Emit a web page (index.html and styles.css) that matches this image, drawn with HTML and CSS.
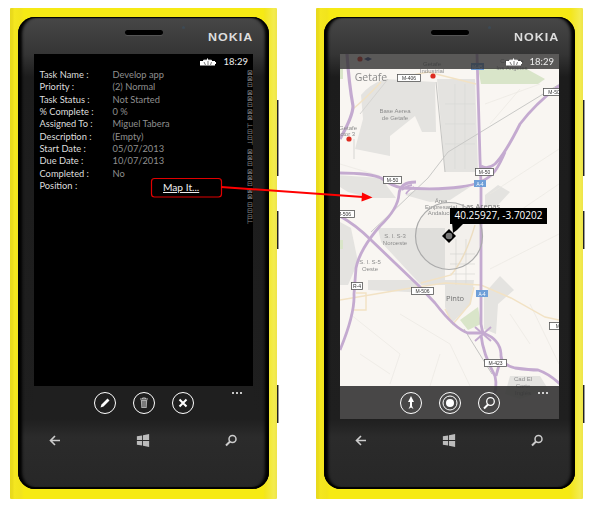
FILE: index.html
```html
<!DOCTYPE html>
<html lang="en">
<head>
<meta charset="utf-8">
<title>Task details and map</title>
<link rel="stylesheet" href="styles.css">
</head>
<body>
<main class="stage">
  <section class="phone">
    <i class="side-btn side-a"></i><i class="side-btn side-b"></i><i class="side-btn side-c"></i>
    <div class="bezel">
      <header class="bezel-top">
        <span></span><span class="speaker"></span>
        <div class="brand"><i class="sensor"></i><span class="logo">NOKIA</span></div>
      </header>
      <div class="screen">
        <div class="status">
          <svg class="battery" viewBox="0 0 16 8"><path d="M0 3h3V1.500l1 1 1-1.500 1 1.500L7.500 0 9 2.500 10 1l1 1.500 1-1V3h3v1h1v2h-1v1.500H0z" fill="#fff"/><path d="M4 4l1.500 3M8 3v4M11.500 4L10.500 7" stroke="#222" stroke-width=".6"/></svg>
          <span class="time">18:29</span>
        </div>
        <div class="content">
          <dl class="fields">
            <dt>Task Name :</dt><dd>Develop app</dd>
            <dt>Priority :</dt><dd>(2) Normal</dd>
            <dt>Task Status :</dt><dd>Not Started</dd>
            <dt>% Complete :</dt><dd>0 %</dd>
            <dt>Assigned To :</dt><dd>Miguel Tabera</dd>
            <dt>Description :</dt><dd>(Empty)</dd>
            <dt>Start Date :</dt><dd>05/07/2013</dd>
            <dt>Due Date :</dt><dd>10/07/2013</dd>
            <dt>Completed :</dt><dd>No</dd>
            <dt>Position :</dt><dd><a class="map-link">Map It...</a></dd>
          </dl>
          <div class="strip">
            <span class="tofu">⊠⊠⊟</span>
            <span class="tofu">⊠⊠⊟</span>
            <span class="tofu">⊠⊠</span>
            <span class="tofu">⊢⊟⊟⊣</span>
            <span class="tofu">⊠⊠⊟</span>
            <span class="tofu">⊠⊠⊟</span>
            <span class="tofu">⊠⊠</span>
            <span class="tofu">⊟⊟⊟⊢</span>
          </div>
        </div>
        <nav class="appbar">
          <span class="round"><svg viewBox="0 0 20 20"><path d="M5.500 14.500l1-3 6-6 2 2-6 6z" fill="#fff"/></svg></span>
          <span class="round"><svg viewBox="0 0 20 20"><path d="M6 6h8M8.500 6V5h3v1" fill="none" stroke="#bbb"/><path d="M6.800 7h6.400l-.5 8H7.300z" fill="#aaa"/><path d="M9 8v6M11 8v6" stroke="#222" stroke-width=".7"/></svg></span>
          <span class="round"><svg viewBox="0 0 20 20"><path d="M6.500 6.500l7 7M13.500 6.500l-7 7" stroke="#fff" stroke-width="2"/></svg></span>
          <span class="dots"><i></i><i></i><i></i></span>
        </nav>
      </div>
      <footer class="keys">
        <svg viewBox="0 0 14 14"><path d="M12 7H3M7 2.500L2.500 7 7 11.500" fill="none" stroke="#ccc" stroke-width="1.600"/></svg>
        <svg viewBox="0 0 16 16"><path d="M1 3.200l6-1v5.300H1zM8 2l7-1.300V7.500H8zM1 8.500h6v5.300l-6-1zM8 8.500h7v6.800l-7-1.300z" fill="#bbb"/></svg>
        <svg viewBox="0 0 14 14"><circle cx="8.500" cy="5.500" r="3.500" fill="none" stroke="#ccc" stroke-width="1.500"/><path d="M6 8L2 12" stroke="#ccc" stroke-width="2"/></svg>
      </footer>
    </div>
  </section>

  <section class="phone">
    <i class="side-btn side-a"></i><i class="side-btn side-b"></i><i class="side-btn side-c"></i>
    <div class="bezel">
      <header class="bezel-top">
        <span></span><span class="speaker"></span>
        <div class="brand"><i class="sensor"></i><span class="logo">NOKIA</span></div>
      </header>
      <div class="screen screen-map">
        <svg class="map" viewBox="0 0 219 365">
          <rect width="219" height="365" fill="#f9f6f2"/>
          <g fill="#e4e3e0">
            <path d="M21 41Q30 30 45 25L95 28 96 78 82 78 75 62 50 82 50 102 15 95 23 65z"/>
            <path d="M97 25L135 25 138 118 105 118z"/>
            <path d="M-2 121L41 124 56 144 31 144 8 138 0 133z"/>
            <path d="M65 141L78 135 130 133 110 146 90 148z"/>
            <path d="M38 174L105 174 105 231 81 231 41 188z"/>
            <path d="M0 168L11 174 18 208 8 231 0 231z"/>
            <path d="M28 226L75 226 88 239 28 236z"/>
            <path d="M145 141L158 131 170 138 158 151 145 153zM144 240L160 222 174 236 158 250 156 280 144 275z"/>
            <path d="M105 226L134 226 131 250 111 270 105 253z"/>
            <path d="M170 322L200 322 208 335 180 345 165 340z"/>
          </g>
          <g fill="#d9e5c9">
            <path d="M138 14L185 14 205 25 198 30 141 30z"/>
            <path d="M120 266L138 253 141 270 128 276z"/>
            <path d="M0 15L3 15 3 25 0 25zM0 186L3 186 3 195 0 195z"/>
          </g>
          <g fill="none" stroke="#ebe8e3" stroke-width=".7">
            <path d="M145 50L200 30M150 140L219 95M160 170L219 130M150 215L219 180M0 110L40 122M10 260L60 300L50 330M60 260L110 290L130 332M20 300L50 320M170 260L190 290M190 250L219 310M100 300L90 332M150 70L180 35"/>
            <path d="M110 200H135M110 210H135M110 220H135M116 185V231M126 185V231M105 50H135M105 70H135M105 90H135M115 30V115M125 30V115" stroke="#d9d8d5"/>
          </g>
          <g fill="none" stroke="#c9c9c7">
            <path d="M218 31L108 98 88 124 31 178"/>
            <path d="M96 28L105 118" stroke="#c4c4c2"/>
            <path d="M14 85L14 105M20 60L48 25" stroke="#d6d5d2"/>
            <path d="M124 275L152 320" stroke="#c4c4c2"/>
          </g>
          <g fill="none" stroke="#f2e2c4" stroke-width="1.400">
            <path d="M41 28Q25 45 13 55M58 24L88 18 136 30"/>
            <path d="M81 229L111 221Q125 205 135 171"/>
            <path d="M0 246L71 234 105 229 141 231 171 244 205 263 219 266"/>
            <path d="M14 256H26V239H16M105 255L113 270 130 250 134 233"/>
          </g>
          <g fill="none" stroke="#c4aad0" stroke-width="2.800" stroke-linejoin="round">
            <path d="M7 0Q9 30 13 52Q13 62 0 85" stroke-width="3.200"/>
            <path d="M137 0L140 105 141 130V270Q142 276 143 279"/>
            <path d="M220 31Q195 50 180 70Q165 100 155 110Q147 116 141 112"/>
            <path d="M-2 119Q30 119 41 124Q52 132 62 134Q100 136 120 133Q145 130 155 117Q160 110 165 98"/>
            <path d="M76 128Q60 128 59 140Q58 155 40 172Q20 195 16 214L14 240Q15 260 0 296"/>
            <path d="M62 136Q66 132 72 131M66 140Q68 136 74 133" stroke-width="1.800"/>
            <path d="M-2 161Q15 170 31 186L78 231 95 249Q115 275 128 279L143 279"/>
            <path d="M143 279Q160 285 161 300Q160 310 175 314Q190 316 198 316Q210 320 222 332"/>
            <path d="M141 281Q143 300 155 322Q158 335 152 345"/>
            <path d="M161 306Q158 314 156 322"/>
            <path d="M135 273L151 287M151 273L135 287" stroke-width="2"/>
          </g>
          <g fill="#dd2b20">
            <circle cx="93" cy="22" r="2.600"/><circle cx="9" cy="85" r="2.600"/><circle cx="20" cy="5" r="2.600"/>
          </g>
          <path d="M24 5l4-2 4 2-4 2z" fill="#3a4a8a"/>
          <g class="lbl" text-anchor="middle">
            <text x="31" y="27" class="big">Getafe</text>
            <text x="92" y="12">Getafe</text><text x="92" y="18.500">Industrial</text>
            <text x="172" y="9">Cerro de</text><text x="172" y="16">los Ángeles</text>
            <text x="55" y="59">Base Aerea</text><text x="55" y="66">de Getafe</text>
            <text x="8" y="76">Getafe</text><text x="4" y="82">Sector 3</text>
            <text x="101" y="149">Área</text><text x="101" y="155">Empresarial</text><text x="101" y="161">Andalucía</text>
            <text x="141" y="155" class="mid">Las Arenas</text>
            <text x="55" y="184">S. I. S-3</text><text x="55" y="191">Noroeste</text>
            <text x="30" y="210">S. I. S-5</text><text x="30" y="217">Oeste</text>
            <text x="115" y="247" class="mid">Pinto</text>
            <text x="183" y="327">Cad El</text><text x="183" y="334">Corte</text><text x="183" y="341">Inglés</text>
          </g>
          <g class="shield">
            <rect x="57.500" y="20.500" width="23" height="7"/><text x="69" y="26.300">M-406</text>
            <rect x="203.500" y="34.500" width="22" height="7"/><text x="214" y="40.300">M-50</text>
            <rect x="135.500" y="114.500" width="18" height="7"/><text x="144.500" y="120.300">M-50</text>
            <rect x="43.500" y="122.500" width="18" height="7"/><text x="52.500" y="128.300">M-50</text>
            <rect x="-6.500" y="156.500" width="21" height="7"/><text x="4" y="162.300">M-506</text>
            <rect x="11.500" y="228.500" width="11" height="7"/><text x="17" y="234.300">R-4</text>
            <rect x="71.500" y="233.500" width="22" height="7"/><text x="82.500" y="239.300">M-506</text>
            <rect x="209.500" y="268.500" width="22" height="7"/><text x="220" y="274.300">M-4</text>
            <rect x="144.500" y="305.500" width="22" height="7"/><text x="155.500" y="311.300">M-423</text>
          </g>
          <g class="shield-blue">
            <rect x="131" y="9" width="13" height="7"/><text x="137.500" y="15">M-45</text>
            <rect x="134" y="126" width="12" height="7"/><text x="140" y="132">A-4</text>
            <rect x="136" y="236" width="12" height="7"/><text x="142" y="242">A-4</text>
          </g>
          <circle cx="109" cy="182" r="33.500" fill="rgba(150,150,150,.06)" stroke="#aaa" stroke-width="1.200"/>
          <path d="M112 168h13l-8 8-4 3z" fill="#000"/>
          <path d="M109 175l7 7-7 7-7-7z" fill="#000"/>
          <circle cx="109" cy="182" r="3.300" fill="#777"/>
        </svg>
        <div class="status status-map">
          <svg class="battery" viewBox="0 0 16 8"><path d="M0 3h3V1.500l1 1 1-1.500 1 1.500L7.500 0 9 2.500 10 1l1 1.500 1-1V3h3v1h1v2h-1v1.500H0z" fill="#fff"/><path d="M4 4l1.500 3M8 3v4M11.500 4L10.500 7" stroke="#222" stroke-width=".6"/></svg>
          <span class="time">18:29</span>
        </div>
        <div class="coords">40.25927, -3.70202</div>
        <nav class="appbar appbar-map">
          <span class="round"><svg viewBox="0 0 20 20"><path d="M10 3l3 6h-2v4l1.500 3-2.500-1.500L7.500 16 9 13V9H7z" fill="#fff"/></svg></span>
          <span class="round"><svg viewBox="0 0 20 20"><circle cx="10" cy="10" r="7" fill="none" stroke="#fff"/><circle cx="10" cy="10" r="4" fill="#fff"/></svg></span>
          <span class="round"><svg viewBox="0 0 20 20"><circle cx="11.500" cy="8.500" r="3.800" fill="none" stroke="#fff" stroke-width="1.300"/><path d="M9 11.500L5 15.500" stroke="#fff" stroke-width="2"/></svg></span>
          <span class="dots"><i></i><i></i><i></i></span>
        </nav>
      </div>
      <footer class="keys">
        <svg viewBox="0 0 14 14"><path d="M12 7H3M7 2.500L2.500 7 7 11.500" fill="none" stroke="#ccc" stroke-width="1.600"/></svg>
        <svg viewBox="0 0 16 16"><path d="M1 3.200l6-1v5.300H1zM8 2l7-1.300V7.500H8zM1 8.500h6v5.300l-6-1zM8 8.500h7v6.800l-7-1.300z" fill="#bbb"/></svg>
        <svg viewBox="0 0 14 14"><circle cx="8.500" cy="5.500" r="3.500" fill="none" stroke="#ccc" stroke-width="1.500"/><path d="M6 8L2 12" stroke="#ccc" stroke-width="2"/></svg>
      </footer>
    </div>
  </section>

  <svg class="annotation" viewBox="0 0 605 516">
    <rect x="151.500" y="178.500" width="70" height="18.500" rx="3" fill="none" stroke="#e00000" stroke-width="1.200"/>
    <path d="M221 187L363 197" stroke="#f00" stroke-width="2"/>
    <path d="M362 192.500L372.500 197.500 361.500 201.500z" fill="#f00"/>
  </svg>
</main>
</body>
</html>
```
FILE: styles.css
```css
* { box-sizing: border-box; }
html, body { margin: 0; padding: 0; background: #fff; }
.stage {
  position: relative;
  width: 605px;
  height: 516px;
  padding: 8px 0 0 10px;
  display: flex;
  gap: 39px;
  align-items: flex-start;
  overflow: hidden;
  font-family: Lato, "Liberation Sans", sans-serif;
  filter: blur(.3px);
}
.phone {
  position: relative;
  width: 267px;
  height: 491px;
  padding: 9px 8px 10px;
  border-radius: 1px;
  background: linear-gradient(90deg, #e6d81e 0, #ecdd1c 3px, #f4e720 4px, #f2e41c 11px, #f6ea14 14px, #f6ea14 253px, #f3e61e 255px, #f3ec50 264px, #eee44a 267px);
}
.side-btn { position: absolute; left: 267px; width: 2px; background: #222; border-right: 1px solid #999; }
.side-a { top: 92px; height: 76px; }
.side-b { top: 203px; height: 38px; }
.side-c { top: 377px; height: 38px; }
.bezel {
  width: 251px;
  height: 472px;
  padding: 0 16px;
  border-radius: 17px;
  background: linear-gradient(180deg, #474747 0, #353535 37px, #1c1c1c 60px, #1f1f1f 402px, #2b2b2b 420px, #272727 100%);
  box-shadow: inset 5px 0 3px -1px #000, inset -5px 0 3px -1px #000, inset 0 1px 1px #000, inset 0 -2px 1px #000;
  display: flex;
  flex-direction: column;
}
.bezel-top {
  height: 37px;
  display: grid;
  grid-template-columns: 1fr 38px 1fr;
}
.speaker { height: 5px; margin-top: 13px; border-radius: 3px; background: #000; box-shadow: 0 1px 0 #555; }
.brand { display: flex; justify-content: space-between; padding-left: 19px; }
.sensor { width: 3px; height: 3px; margin-top: 9px; border-radius: 50%; background: #3d4a55; }
.logo {
  margin: 15px 0 0;
  color: #ddd;
  font: bold 10px/12px "Liberation Sans", sans-serif;
  letter-spacing: .8px;
  transform: scaleX(1.25);
  transform-origin: right;
}
.screen {
  position: relative;
  height: 365px;
  background: #000;
  display: flex;
  flex-direction: column;
  overflow: hidden;
}
.status {
  position: relative;
  height: 15px;
  flex: none;
  display: flex;
  justify-content: flex-end;
  align-items: center;
  gap: 8px;
  padding-right: 5px;
  color: #eee;
  font-size: 9.5px;
}
.status-map { background: rgba(45, 45, 45, .78); }
.battery { width: 16px; height: 8px; }
.content { flex: 1; display: flex; min-height: 0; }
.fields {
  flex: 1;
  margin: 0;
  padding: 0 0 0 5.5px;
  display: grid;
  grid-template-columns: 73px 1fr;
  grid-auto-rows: 12.33px;
  font-size: 9.3px;
  line-height: 12.33px;
  white-space: nowrap;
}
.fields dt { color: #ddd; }
.fields dd { margin: 0; color: #8f8f8f; }
.map-link { display: block; margin: 1px 0 0 50.5px; color: #eee; font-size: 10.2px; text-decoration: underline; }
.strip {
  width: 7px;
  height: 172px;
  display: flex;
  flex-direction: column;
  gap: 2.3px;
  color: #8a8a8a;
}
.tofu {
  display: block;
  writing-mode: vertical-rl;
  text-orientation: upright;
  font: 7px/7px "DejaVu Sans", sans-serif;
  letter-spacing: -2.2px;
  white-space: nowrap;
}
.appbar {
  position: relative;
  height: 33px;
  flex: none;
  margin-top: auto;
  display: flex;
  align-items: center;
  justify-content: center;
  gap: 17px;
  background: #1f1f1f;
}
.appbar-map { background: rgba(52, 52, 52, .9); }
.round { width: 22px; height: 22px; border: 1px solid #fff; border-radius: 50%; display: block; }
.round svg { width: 20px; height: 20px; display: block; }
.dots { position: absolute; top: 6px; right: 11px; display: flex; gap: 2px; }
.dots i { width: 2px; height: 2px; border-radius: 50%; background: #fff; }
.keys {
  display: flex;
  justify-content: space-between;
  padding: 14px 15px 0 14px;
}
.keys svg { width: 14px; height: 15px; }
.map { position: absolute; inset: 0; width: 219px; height: 365px; }
.screen-map { background: #f9f6f2; }
.lbl text { font: 6px "Liberation Sans", sans-serif; fill: #8d8d8d; }
.lbl .big { font: 10.5px "Open Sans", sans-serif; fill: #8a8a8a; }
.lbl .mid { font: 7.5px "Open Sans", sans-serif; fill: #6f6f6f; }
.shield rect { fill: #fff; stroke: #555; stroke-width: .8px; }
.shield text { font: 5px "Liberation Sans", sans-serif; fill: #333; text-anchor: middle; }
.shield-blue rect { fill: #6f9fd8; }
.shield-blue text { font: 4.5px "Liberation Sans", sans-serif; fill: #fff; text-anchor: middle; }
.coords {
  position: absolute;
  left: 110px;
  top: 154px;
  width: 97px;
  height: 16px;
  background: #000;
  color: #fff;
  font: 10px/15px "Open Sans", sans-serif;
  text-align: center;
  white-space: nowrap;
  z-index: 1;
}
.annotation { position: absolute; inset: 0; width: 605px; height: 516px; z-index: 2; }
```
